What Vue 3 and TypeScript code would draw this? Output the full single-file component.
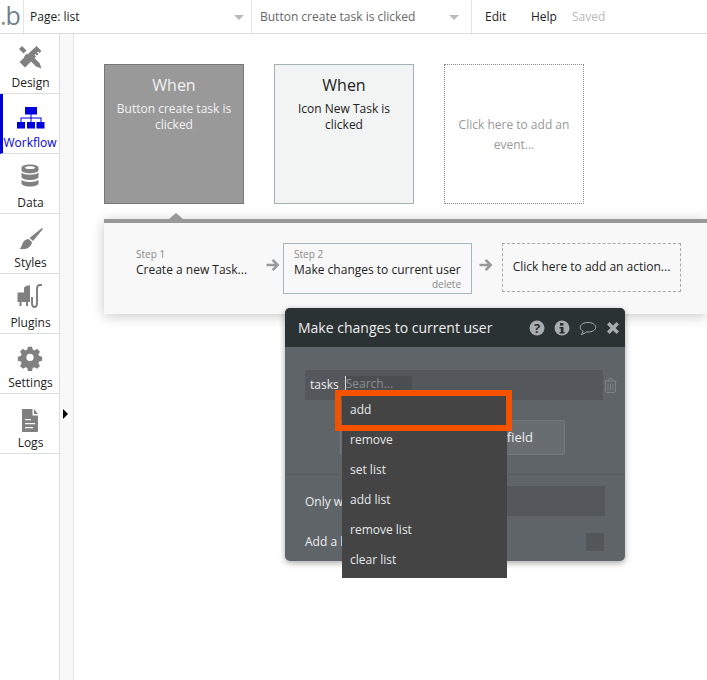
<script setup lang="ts">
const navItems = [
  { label: 'Design', icon: 'design' },
  { label: 'Workflow', icon: 'workflow', active: true },
  { label: 'Data', icon: 'data' },
  { label: 'Styles', icon: 'styles' },
  { label: 'Plugins', icon: 'plugins' },
  { label: 'Settings', icon: 'settings' },
  { label: 'Logs', icon: 'logs' },
]

const menuItems = ['add', 'remove', 'set list', 'add list', 'remove list', 'clear list']
</script>

<template>
  <div class="app">
    <header class="topbar">
      <div class="logo"><span class="logo-dot">.</span>b</div>
      <div class="drop page-drop">
        <span>Page: list</span>
        <i class="caret"></i>
      </div>
      <div class="drop event-drop">
        <span>Button create task is clicked</span>
        <i class="caret"></i>
      </div>
      <nav class="menu-links">
        <span class="edit">Edit</span>
        <span class="help">Help</span>
        <span class="saved">Saved</span>
      </nav>
    </header>

    <div class="main">
      <aside class="sidebar">
        <div v-for="item in navItems" :key="item.label" class="nav-item" :class="{ active: item.active }">
          <svg class="nav-icon" viewBox="0 0 30 30" width="30" height="30">
            <g v-if="item.icon === 'design'" fill="#808080">
              <path d="M7 5 L11.500 9.500 L8.500 12.500 L4 8 Z" />
              <path d="M21.500 5 L26.500 10 L24.500 12 L23 10.500 L22 11.500 L23.500 13 L22 14.500 L20.500 13 L19.500 14 L21 15.500 L10 26.500 L4.500 21 Z" />
              <path d="M11.500 12.500 L14 15 L10.500 18.500 L9 16 Z" />
              <path d="M19 16.500 L24.500 22 L26.500 27.500 L21 25.500 L15.500 20 Z" />
            </g>
            <g v-else-if="item.icon === 'workflow'" fill="#0000dd">
              <rect x="9" y="6" width="12" height="7.500" />
              <rect x="1" y="21" width="8" height="6.500" />
              <rect x="11" y="21" width="8" height="6.500" />
              <rect x="20.500" y="21" width="8" height="6.500" />
              <path d="M14.500 13h1v3.500h10V21h-1v-3.500h-9V21h-1v-3.500h-9V21h-1v-4.500h10z" />
            </g>
            <g v-else-if="item.icon === 'data'" fill="#808080">
              <path fill-rule="evenodd" d="M15 3.500c5 0 8.500 1.300 8.500 3.200V9c0 1.900-3.500 3.300-8.500 3.300S6.500 10.900 6.500 9V6.700C6.500 4.800 10 3.500 15 3.500zm0 1.800c-3 0-5 .6-5 1.400s2 1.400 5 1.400 5-.6 5-1.400-2-1.400-5-1.400z" />
              <path d="M6.500 11.500c1.500 1.500 4.700 2.200 8.500 2.200s7-.7 8.500-2.200v4.300c0 1.900-3.500 3.200-8.500 3.200s-8.500-1.300-8.500-3.200z" />
              <path d="M6.500 18.800c1.500 1.500 4.700 2.200 8.500 2.200s7-.7 8.500-2.200v3.500c0 1.900-3.500 3.200-8.500 3.200s-8.500-1.300-8.500-3.200z" />
            </g>
            <g v-else-if="item.icon === 'styles'" fill="#808080" transform="translate(1 3.500)">
              <path d="M26 3.500c.8.300.8 1 .3 1.700L17 16.500l-3.500-3z" />
              <path d="M12.500 14.500l3.500 3c-.5 4-3.500 6.500-7 7-2 .3-4 .2-5.500-.5 2.500-1 2-3.500 3.500-6 1.200-2.200 3.500-3.500 5.500-3.500z" />
            </g>
            <g v-else-if="item.icon === 'plugins'" fill="none">
              <path fill="#808080" d="M2.500 11.500h6.500V6.500L12 4.500h3V21h-2v4h-2v-4H6.500v4h-2v-4h-2z" />
              <path stroke="#808080" stroke-width="2" d="M17 16v6c0 2.500 1 4 2.500 4s2.500-1.500 2.500-4V8c0-2.500 1-4 3-4h2" />
            </g>
            <g v-else-if="item.icon === 'settings'" fill="#808080">
              <path fill-rule="evenodd" d="M12.700 3.500h4.600l.7 3.300 2 .9 2.900-1.800 3.200 3.200-1.800 2.900.9 2 3.300.7v4.600l-3.300.7-.9 2 1.800 2.900-3.200 3.200-2.900-1.800-2 .9-.7 3.300h-4.600l-.7-3.300-2-.9-2.900 1.800-3.200-3.200 1.800-2.900-.9-2-3.300-.7v-4.600l3.300-.7.9-2-1.800-2.900 3.200-3.200 2.900 1.800 2-.9zM15 11.500a4 4 0 1 0 0 8 4 4 0 0 0 0-8z" transform="translate(1.500 2.500) scale(.9)" />
            </g>
            <g v-else fill="#808080" transform="translate(0 5)">
              <path fill-rule="evenodd" d="M7 3h10.500v6.500H23V25c0 .8-.5 1-1 1H8c-.6 0-1-.4-1-1zm3 10v1.200h6V13zm0 4v1.200h10V17zm0 4v1.200h8V21z" />
              <path d="M19 3l4 5h-4z" />
            </g>
          </svg>
          <span class="nav-label">{{ item.label }}</span>
        </div>
      </aside>

      <div class="strip"><i class="strip-arrow"></i></div>

      <section class="canvas">
        <div class="events">
          <div class="event-card selected">
            <div class="when">When</div>
            <div class="desc">Button create task is clicked</div>
          </div>
          <div class="event-card plain">
            <div class="when">When</div>
            <div class="desc">Icon New Task is clicked</div>
          </div>
          <div class="event-card add">Click here to add an event...</div>
        </div>

        <div class="steps">
          <i class="steps-tip"></i>
          <div class="step step-one">
            <div class="step-no">Step 1</div>
            <div class="step-name">Create a new Task...</div>
          </div>
          <svg class="step-arrow" viewBox="0 0 14 14" width="14" height="14">
            <path fill="#999" d="M7.500 1l6 6-6 6-1.800-1.800 2.900-2.900H.5V5.700h8.100L5.700 2.800z" />
          </svg>
          <div class="step step-two">
            <div class="step-no">Step 2</div>
            <div class="step-name">Make changes to current user</div>
            <div class="step-delete">delete</div>
          </div>
          <svg class="step-arrow" viewBox="0 0 14 14" width="14" height="14">
            <path fill="#999" d="M7.500 1l6 6-6 6-1.800-1.800 2.900-2.900H.5V5.700h8.100L5.700 2.800z" />
          </svg>
          <div class="step-add">Click here to add an action...</div>
        </div>

        <div class="dialog">
          <div class="dialog-head">
            <span class="dialog-title">Make changes to current user</span>
            <div class="dialog-icons">
              <svg viewBox="0 0 16 16" width="16" height="16">
                <circle cx="8" cy="8" r="7.500" fill="#a9acae" />
                <text x="8" y="12.500" text-anchor="middle" class="glyph">?</text>
              </svg>
              <svg viewBox="0 0 16 16" width="16" height="16">
                <circle cx="8" cy="8" r="7.500" fill="#a9acae" />
                <rect x="6" y="3" width="3.400" height="2.600" fill="#2b3234" />
                <path fill="#2b3234" d="M5.500 7h4v5h1.300v1.500H5.500V12h1.300V8.500H5.500z" />
              </svg>
              <svg viewBox="0 0 18 16" width="18" height="16">
                <path fill="none" stroke="#a9acae" stroke-width="1" d="M9 2.500c4 0 7.800 2 7.800 4.800S13 12 9 12c-.6 0-1.300 0-1.900-.1C6 13.200 4.200 14.300 2.200 14.500c1-1 1.700-2 1.900-3.300C2.200 10.300 1.200 8.900 1.200 7.300 1.200 4.500 5 2.500 9 2.500z" />
              </svg>
              <svg viewBox="0 0 14 14" width="14" height="14">
                <path fill="#a9acae" d="M3.500 1L7 4.500 10.500 1 13 3.500 9.500 7l3.500 3.500-2.500 2.500L7 9.500 3.500 13 1 10.500 4.500 7 1 3.500z" />
              </svg>
            </div>
          </div>

          <div class="dialog-body">
            <div class="field-row">
              <div class="field-input">
                <span class="field-name">tasks</span>
                <span class="search">Search...</span>
              </div>
              <svg class="trash" viewBox="0 0 13 15" width="13" height="15">
                <path fill="none" stroke="#7d8285" d="M.5 3h12M4.500 3V1.500c0-.6.400-1 1-1h2c.6 0 1 .4 1 1V3M1.500 3v10.500c0 .6.400 1 1 1h8c.6 0 1-.4 1-1V3M4 5.500v7M6.500 5.500v7M9 5.500v7" />
              </svg>
            </div>
            <div class="change-btn">Change another field</div>
          </div>

          <div class="dialog-foot">
            <div class="only-row">
              <span>Only when</span>
              <div class="only-input"></div>
            </div>
            <div class="break-row">
              <span class="break-text">Add a breakpoint in debug mode</span>
              <div class="check"></div>
            </div>
          </div>

          <ul class="op-menu">
            <li v-for="op in menuItems" :key="op">{{ op }}</li>
          </ul>
          <div class="highlight"></div>
        </div>
      </section>
    </div>
  </div>
</template>

<style>
html, body {
  margin: 0;
  background: #fff;
}
</style>

<style scoped>
.app {
  width: 707px;
  height: 680px;
  overflow: hidden;
  display: flex;
  flex-direction: column;
  font-family: "Open Sans", "Liberation Sans", sans-serif;
  font-size: 12px;
  color: #222;
  background: #fff;
}
.topbar {
  height: 33px;
  flex: none;
  display: flex;
  align-items: center;
  border-bottom: 1px solid #ddd;
}
.logo {
  width: 24px;
  height: 33px;
  flex: none;
  box-sizing: border-box;
  border-right: 1px solid #e4e4e4;
  font-size: 25px;
  line-height: 30px;
  color: #6f7f8c;
  white-space: nowrap;
  letter-spacing: -1px;
}
.logo-dot {
  color: #8d8d8d;
}
.drop {
  height: 33px;
  box-sizing: border-box;
  display: flex;
  align-items: center;
  justify-content: space-between;
  border-right: 1px solid #e4e4e4;
}
.page-drop {
  width: 228px;
  padding: 0 7px 0 6px;
  color: #222;
}
.event-drop {
  width: 220px;
  padding: 0 12px 0 8px;
  color: #666;
}
.caret {
  width: 0;
  height: 0;
  border-left: 5px solid transparent;
  border-right: 5px solid transparent;
  border-top: 5px solid #bbb;
  margin-top: 2px;
}
.menu-links {
  display: flex;
  align-items: center;
  padding-left: 13px;
}
.edit {
  width: 46px;
}
.help {
  width: 41px;
}
.saved {
  color: #bbb;
}
.main {
  flex: 1;
  display: flex;
  min-height: 0;
}
.sidebar {
  width: 59px;
  flex: none;
}
.nav-item {
  height: 59px;
  border-bottom: 1px solid #ddd;
  display: flex;
  flex-direction: column;
  align-items: center;
}
.nav-item.active {
  border-left: 3px solid #0000dd;
  color: #0000dd;
  width: 56px;
}
.nav-icon {
  margin-top: 7px;
  flex: none;
  overflow: visible;
}
.nav-label {
  line-height: 18px;
  margin: 3px 0 0 2px;
  white-space: nowrap;
}
.active .nav-label {
  margin-left: -2px;
}
.strip {
  width: 13px;
  flex: none;
  background: #f8f8f8;
  border-left: 1px solid #ddd;
  border-right: 1px solid #e4e4e4;
  position: relative;
}
.strip-arrow {
  position: absolute;
  left: 3px;
  top: 375px;
  border-top: 5px solid transparent;
  border-bottom: 5px solid transparent;
  border-left: 5px solid #000;
}
.canvas {
  flex: 1;
  min-width: 0;
  position: relative;
  padding: 30px 0 0 30px;
}
.events {
  display: flex;
  gap: 30px;
}
.event-card {
  width: 140px;
  height: 140px;
  box-sizing: border-box;
  text-align: center;
  padding: 9px 8px 0;
  line-height: 16px;
}
.when {
  font-size: 16px;
  line-height: 22px;
  margin-bottom: 5px;
}
.selected {
  background: #999;
  border: 1px solid #777;
  color: #f2f2f2;
}
.plain {
  background: #f2f4f3;
  border: 1px solid #9fb2b8;
}
.add {
  border: 1px dotted #888;
  color: #999;
  line-height: 20px;
  padding: 50px 12px 0;
}
.steps {
  position: relative;
  margin-top: 15px;
  height: 71px;
  background: #f8f8f8;
  border-top: 4px solid #999;
  box-shadow: 0 2px 12px rgba(0, 0, 0, .22);
  display: flex;
  align-items: flex-start;
  padding-top: 20px;
}
.steps-tip {
  position: absolute;
  left: 65px;
  top: -10px;
  border-left: 7px solid transparent;
  border-right: 7px solid transparent;
  border-bottom: 6px solid #999;
}
.step {
  box-sizing: border-box;
}
.step-one {
  width: 162px;
  padding: 4px 0 0 32px;
}
.step-no {
  font-size: 10px;
  color: #888;
  line-height: 14px;
}
.step-name {
  line-height: 18px;
  white-space: nowrap;
  color: #222;
}
.step-arrow {
  flex: none;
  margin-top: 15px;
}
.step-two {
  width: 189px;
  height: 51px;
  margin: 0 7px 0 3px;
  padding: 3px 10px 0;
  border: 1px solid #a6b6bc;
}
.step-delete {
  font-size: 10px;
  line-height: 12px;
  color: #888;
  text-align: right;
  margin-top: -1px;
}
.step-add {
  width: 179px;
  height: 49px;
  box-sizing: border-box;
  margin-left: 9px;
  border: 1px dashed #aaa;
  line-height: 45px;
  text-align: center;
  white-space: nowrap;
}
.dialog {
  position: absolute;
  left: 211px;
  top: 274px;
  width: 340px;
  height: 253px;
  border-radius: 5px;
  background: #5f6468;
  box-shadow: 0 2px 6px rgba(0, 0, 0, .35);
  color: #eee;
}
.dialog-head {
  height: 39px;
  background: #2b3234;
  border-radius: 5px 5px 0 0;
  display: flex;
  align-items: center;
  justify-content: space-between;
  padding: 0 5px 0 13px;
}
.dialog-title {
  font-size: 14px;
}
.dialog-icons {
  display: flex;
  align-items: center;
  gap: 9px;
}
.glyph {
  font-size: 13px;
  font-weight: 700;
  fill: #2b3234;
  font-family: "Open Sans", sans-serif;
}
.dialog-body {
  height: 128px;
  box-sizing: border-box;
  padding: 23px 0 0 20px;
  border-bottom: 1px solid #565b5e;
}
.field-row {
  display: flex;
  align-items: center;
}
.field-input {
  width: 298px;
  height: 30px;
  flex: none;
  background: #54585c;
  display: flex;
  align-items: flex-end;
}
.field-name {
  padding: 0 6px 8px 5px;
  line-height: 15px;
}
.search {
  width: 67px;
  height: 24px;
  box-sizing: border-box;
  padding-left: 1px;
  background: linear-gradient(#ddd, #ddd) 0 0 / 1px 14px no-repeat #4a4e51;
  border-radius: 0 2px 0 0;
  line-height: 16px;
  color: #8a8e91;
  overflow: hidden;
}
.trash {
  margin-left: 1px;
  flex: none;
}
.change-btn {
  width: 225px;
  height: 35px;
  margin: 20px 0 0 35px;
  box-sizing: border-box;
  background: #686d71;
  border: 1px solid #74797c;
  border-radius: 2px;
  font-size: 13px;
  line-height: 33px;
  text-align: right;
  padding-right: 31px;
}
.dialog-foot {
  padding: 11px 20px 0;
}
.only-row {
  display: flex;
  align-items: center;
  height: 30px;
  gap: 15px;
}
.only-input {
  flex: 1;
  height: 30px;
  background: #54585c;
}
.break-row {
  display: flex;
  align-items: center;
  justify-content: space-between;
  margin-top: 17px;
  height: 18px;
  padding-right: 1px;
}
.break-text {
  margin-top: -2px;
}
.check {
  width: 18px;
  height: 18px;
  background: #53575a;
}
.op-menu {
  position: absolute;
  left: 57px;
  top: 87px;
  width: 165px;
  margin: 0;
  padding: 0 0 3px;
  list-style: none;
  background: #444;
  color: #e4e8ea;
}
.op-menu li {
  height: 30px;
  line-height: 29px;
  padding-left: 8px;
}
.highlight {
  position: absolute;
  left: 50px;
  top: 82px;
  width: 177px;
  height: 41px;
  box-sizing: border-box;
  border: 6px solid #f55200;
}
</style>
